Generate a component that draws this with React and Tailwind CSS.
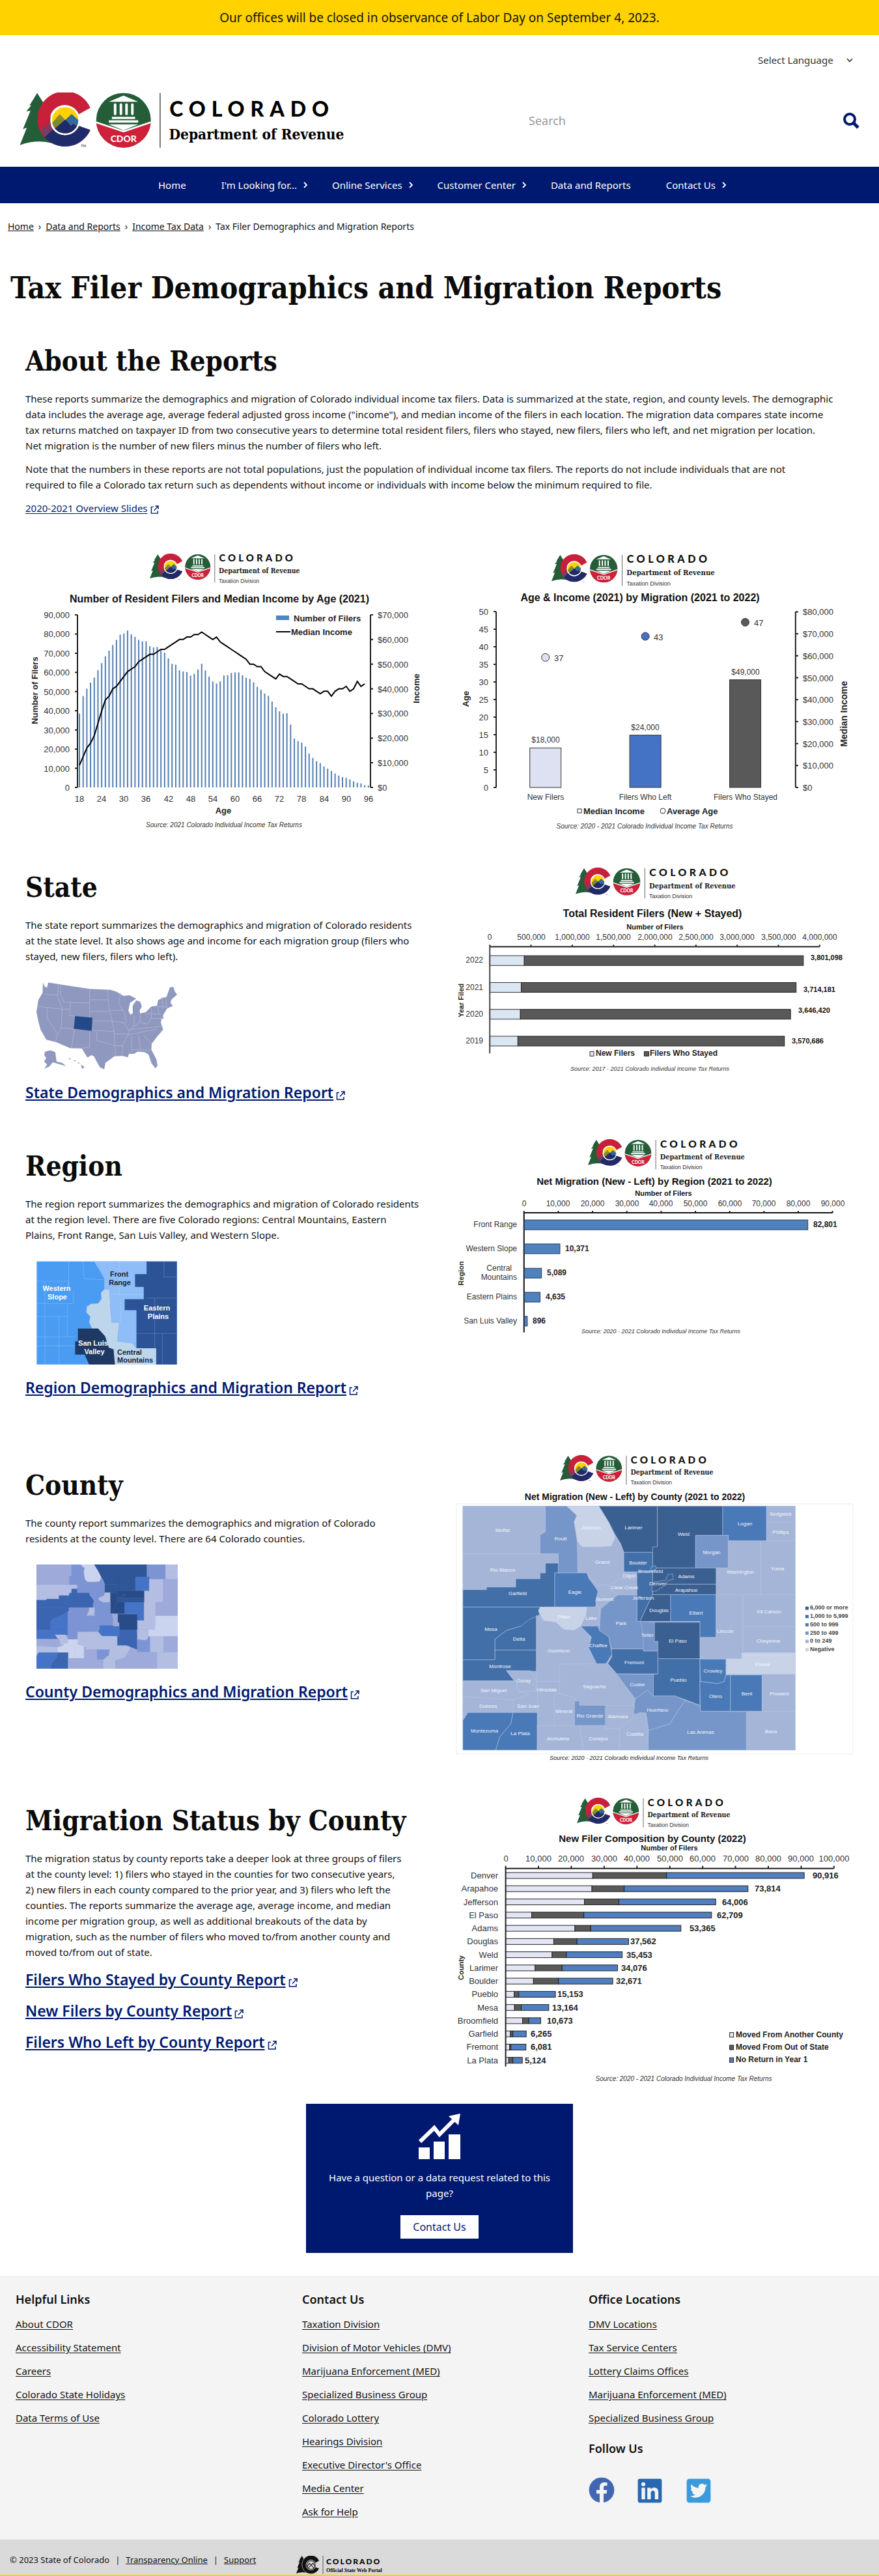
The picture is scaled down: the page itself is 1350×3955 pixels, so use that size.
import React from "react";
import { FaFacebook, FaLinkedin, FaTwitterSquare } from "react-icons/fa";

const C_SHAPE = "M357 107 A128 128 0 1 0 357 210 L303 191 A70 70 0 1 1 303 137 Z";
const TREE = "M110 38 L74 97 L83 95 L60 124 L79 121 L44 206 L62 199 L30 280 Q110 252 182 272 L170 120 L138 82 Z";

function Emblems({ id }) {
  return (
    <g>
      <clipPath id={id + "c"}><path d={C_SHAPE} /></clipPath>
      <clipPath id={id + "s"}><circle cx="240" cy="165" r="61" /></clipPath>
      <clipPath id={id + "r"}><circle cx="511" cy="165" r="127" /></clipPath>
      <path d={TREE} fill="#245d38" />
      <g clipPath={`url(#${id}c)`}>
        <rect x="100" y="30" width="270" height="270" fill="#c8203a" />
        <path d="M146 243 L215 170 L303 191 H400 V300 H100 Z" fill="#1f2a6b" />
        <path d="M110 222 L178 172 L200 190 L146 243 Z" fill="#7b3b62" />
        <path d="M100 200 L146 243 L180 300 H100 Z" fill="#1f2a6b" />
        <path d="M110 100 L128 215 L146 243 L110 250 Z" fill="#c8203a" />
      </g>
      <circle cx="240" cy="165" r="69" fill="#fff" />
      <g clipPath={`url(#${id}s)`}>
        <rect x="170" y="100" width="140" height="140" fill="#ffd200" />
        <path d="M170 188 L215 137 L262 190 L200 230 L170 230 Z" fill="#7d8a2c" />
        <path d="M196 157 L215 137 L238 160 L226 168 L214 158 L204 166 Z" fill="#8b8b3f" />
        <path d="M228 175 L270 136 L310 172 V200 H240 Z" fill="#35699a" />
        <path d="M240 162 L268 190 L278 180 L310 205 V240 H170 V215 L196 200 Z" fill="#1f2a6b" />
      </g>
      <g clipPath={`url(#${id}r)`}>
        <rect x="380" y="30" width="262" height="262" fill="#245d38" />
        <path d="M380 174 L511 216 L642 174 V300 H380 Z" fill="#d01f38" />
        <path d="M380 173 L511 217 L642 173" fill="none" stroke="#fff" strokeWidth="8" />
      </g>
      <g fill="#fff">
        <path d="M443 79 L511 50 L579 79 Z" />
        {[466, 493, 519, 546].map((x) => <rect key={x} x={x} y="87" width="12" height="54" rx="5" />)}
        <rect x="457" y="149" width="108" height="10" />
        <rect x="443" y="165" width="136" height="11" />
        <path d="M443 184 H579 L511 211 Z" />
      </g>
      <text x="511" y="267" textAnchor="middle" fill="#fff" fontSize="42" className="font-['Lato'] font-black">CDOR</text>
      <text x="313" y="290" fill="#111" fontSize="16" className="font-['Lato']">TM</text>
    </g>
  );
}

function Brand({ x, y, scale, id }) {
  return (
    <g transform={`translate(${x} ${y}) scale(${scale / 3}) translate(-30 -38)`}>
      <Emblems id={id} />
      <path d="M681 38 V322" stroke="#444" strokeWidth="5" />
      <text x="724" y="112" fontSize="97" fill="#0d0d0d" className="font-['Lato'] font-black tracking-[27px]">COLORADO</text>
      <text x="722" y="226" fontSize="68" fill="#222" className="font-['DejaVu_Serif_Condensed',serif] font-bold">Department of Revenue</text>
      <text x="722" y="322" fontSize="54" fill="#333" className="font-['Liberation_Sans',sans-serif]">Taxation Division</text>
    </g>
  );
}

function Label({ x, y, size = 12, anchor = "middle", bold, italic, fill = "#333", turn, children }) {
  const px = Math.round(x);
  const py = Math.round(y);
  return (
    <text
      x={px} y={py} dy=".35em" fontSize={size} textAnchor={anchor} fill={fill}
      fontWeight={bold ? 700 : 400} fontStyle={italic ? "italic" : "normal"}
      transform={turn ? `rotate(-90 ${px} ${py})` : undefined}
    >
      {children}
    </text>
  );
}

function Chart({ height, label, children }) {
  return (
    <svg viewBox={`0 0 611 ${height}`} role="img" aria-label={label} className="block h-auto w-full font-['Liberation_Sans',sans-serif]">
      {children}
    </svg>
  );
}

const FILERS = [38.5, 47.7, 51.5, 54.7, 57.3, 61.2, 64.8, 68.4, 71.4, 74.3, 77, 79.7, 80.3, 81.8, 79.8, 78.5, 77, 76.2, 76.2, 73.7, 73, 73.2, 71.5, 70.3, 67.3, 64.5, 64, 61.1, 60.5, 60.2, 58.3, 59.2, 61.5, 64.5, 61, 57.8, 55.2, 54.2, 55.3, 58.4, 58.5, 59.7, 60, 60, 58.5, 57.2, 56.6, 54.8, 52.5, 51, 49, 47.8, 44.8, 41.8, 39.7, 38.5, 38.7, 32.8, 25.5, 24.2, 23.4, 21.3, 17.7, 15.4, 13.7, 12.7, 11, 9.8, 8.6, 7.3, 6.2, 5.4, 5, 4.2, 3.2, 2.5, 2.1, 1.2, 1];
const INCOME = [9, 12.5, 16, 18, 21, 26, 31, 35.5, 37, 40, 41, 43, 45, 47, 48, 49, 51, 52, 53, 54, 54, 55, 56, 56, 57, 58, 59, 60, 60, 61, 61, 62, 62, 63, 62, 61, 60, 61, 59, 58, 57, 56, 55, 54, 53, 52, 50, 50, 49, 49, 47, 46, 45, 44, 46, 45, 45, 44, 43, 42, 42, 41, 40, 40, 39, 38, 39, 39, 37, 39, 40, 40, 41, 39, 40, 43, 41, 42];

function AgeChart() {
  const X = (v) => v / 2.45 - 9;
  const bar = (i) => 83 + i * 5.69;
  const base = 369;
  return (
    <Chart height={450} label="Number of resident filers and median income by age">
      <Brand x={191} y={11} scale={0.46} id="a" />
      <Label x={X(753)} y={79} size={16} bold fill="#111">Number of Resident Filers and Median Income by Age (2021)</Label>
      {FILERS.map((v, i) => <rect key={i} x={bar(i) - 1} y={base - v * 2.944} width="2" height={v * 2.944} fill="#557fb0" />)}
      <path d="M80 104 V369 M530 104 V369" stroke="#222" strokeWidth="2" />
      {[0, 1, 2, 3, 4, 5, 6, 7, 8, 9].map((n) => (
        <g key={n}>
          <path d={`M76 ${base - n * 29.44} h4`} stroke="#222" strokeWidth="2" />
          <Label x={68} y={base - n * 29.44} size={13} anchor="end">{n ? n + "0,000" : "0"}</Label>
        </g>
      ))}
      {[0, 1, 2, 3, 4, 5, 6, 7].map((n) => (
        <g key={n}>
          <path d={`M530 ${base - n * 37.86} h4`} stroke="#222" strokeWidth="2" />
          <Label x={541} y={base - n * 37.86} size={13} anchor="start">{n ? "$" + n + "0,000" : "$0"}</Label>
        </g>
      ))}
      {[18, 24, 30, 36, 42, 48, 54, 60, 66, 72, 78, 84, 90, 96].map((a) => <Label key={a} x={bar(a - 18)} y={386} size={13}>{a}</Label>)}
      <polyline points={INCOME.map((v, i) => `${bar(i)},${base - v * 3.786}`).join(" ")} fill="none" stroke="#000" strokeWidth="2" />
      <rect x={385} y={105} width="20" height="7" fill="#4f86c0" />
      <Label x={412} y={109} size={13} bold anchor="start" fill="#222">Number of Filers</Label>
      <path d="M385 130 h22" stroke="#000" strokeWidth="2" />
      <Label x={408} y={130} size={13} bold anchor="start" fill="#222">Median Income</Label>
      <Label x={14} y={220} size={13} bold turn fill="#222">Number of Filers</Label>
      <Label x={600} y={217} size={13} bold turn fill="#222">Income</Label>
      <Label x={X(768)} y={404} size={13} bold fill="#222">Age</Label>
      <Label x={X(769)} y={426} size={10} italic>Source: 2021 Colorado Individual Income Tax Returns</Label>
    </Chart>
  );
}

function MigrationChart() {
  const X = (v) => v / 2.34 - 20;
  const Y = (v) => v / 3 - 10;
  const groups = [
    ["New Filers", 369, 955, "$18,000", 538, 37, "#dde1f2"],
    ["Filers Who Left", 728, 896, "$24,000", 441, 43, "#4472c4"],
    ["Filers Who Stayed", 1087, 641, "$49,000", 376, 47, "#595959"],
  ];
  return (
    <Chart height={450} label="Age and income by migration">
      <Brand x={147} y={12} scale={0.5} id="b" />
      <Label x={X(708)} y={Y(261)} size={16} bold fill="#111">Age &amp; Income (2021) by Migration (2021 to 2022)</Label>
      <path d={`M62 ${Y(327)} V${Y(1138)} M${X(1268)} ${Y(327)} V${Y(1138)}`} stroke="#222" strokeWidth="2" />
      {[0, 5, 10, 15, 20, 25, 30, 35, 40, 45, 50].map((n) => (
        <g key={n}>
          <path d={`M58 ${369 - n * 5.4} h4`} stroke="#222" strokeWidth="2" />
          <Label x={50} y={369 - n * 5.4} size={13} anchor="end">{n}</Label>
        </g>
      ))}
      {[0, 1, 2, 3, 4, 5, 6, 7, 8].map((n) => (
        <g key={n}>
          <path d={`M522 ${369 - n * 33.7} h4`} stroke="#222" strokeWidth="2" />
          <Label x={533} y={369 - n * 33.7} size={13} anchor="start">{n ? "$" + n + "0,000" : "$0"}</Label>
        </g>
      ))}
      {groups.map(([name, cx, top, money, cy, age, fill]) => (
        <g key={name}>
          <rect x={X(cx) - 24} y={Y(top)} width="48" height={369 - Y(top)} fill={fill} stroke="#333" />
          <Label x={X(cx)} y={Y(top) - 12}>{money}</Label>
          <circle cx={X(cx)} cy={Y(cy)} r="6" fill={fill} stroke="#334" strokeWidth="1" />
          <Label x={X(cx) + 13} y={Y(cy) + 1} size={13} anchor="start">{age}</Label>
          <Label x={X(cx)} y={Y(1181)}>{name}</Label>
        </g>
      ))}
      <Label x={15} y={Y(728)} size={13} bold turn fill="#222">Age</Label>
      <Label x={596} y={Y(798)} size={14} bold turn fill="#222">Median Income</Label>
      <rect x="187" y="402" width="6" height="6" fill="none" stroke="#333" />
      <Label x={196} y={405} size={13} bold anchor="start" fill="#222">Median Income</Label>
      <circle cx="318" cy="405" r="4" fill="none" stroke="#333" />
      <Label x={324} y={405} size={13} bold anchor="start" fill="#222">Average Age</Label>
      <Label x={X(726)} y={Y(1315)} size={10} italic>Source: 2020 - 2021 Colorado Individual Income Tax Returns</Label>
    </Chart>
  );
}

function ResidentChart() {
  const X = (v) => v / 2.34 - 20;
  const Y = (v) => v / 2.063 - 20;
  const rows = [
    ["2022", 339, 293, 1296, "3,801,098", 1321, 331],
    ["2021", 424, 282, 1270, "3,714,181", 1296, 431],
    ["2020", 509, 279, 1250, "3,646,420", 1278, 498],
    ["2019", 594, 270, 1228, "3,570,686", 1254, 594],
  ];
  return (
    <Chart height={320} label="Total resident filers">
      <Brand x={184} y={3} scale={0.49} id="d" />
      <Label x={X(753)} y={Y(189)} size={16} bold fill="#111">Total Resident Filers (New + Stayed)</Label>
      <Label x={X(762)} y={Y(233)} size={11} bold fill="#111">Number of Filers</Label>
      {["0", "500,000", "1,000,000", "1,500,000", "2,000,000", "2,500,000", "3,000,000", "3,500,000", "4,000,000"].map((t, i) => (
        <g key={t}>
          <Label x={X(169 + i * 148.2)} y={Y(267)}>{t}</Label>
          <path d={`M${X(169 + i * 148.2)} ${Y(296)} v-3`} stroke="#222" strokeWidth="2" />
        </g>
      ))}
      <path d={`M${X(1354)} ${Y(296)} H${X(169)}`} stroke="#222" strokeWidth="2" fill="none" />
      {rows.map(([year, cy, a, b, total, tx, ty]) => (
        <g key={year}>
          <Label x={X(144)} y={Y(cy)} anchor="end">{year}</Label>
          <rect x={X(169)} y={Y(cy) - 7} width={X(a) - X(169)} height="15" fill="#dae6f2" stroke="#333" />
          <rect x={X(a)} y={Y(cy) - 7} width={X(b) - X(a)} height="15" fill="#595959" stroke="#222" />
          <Label x={X(tx)} y={Y(ty)} size={11} bold anchor="start" fill="#111">{total}</Label>
        </g>
      ))}
      <path d={`M${X(169)} ${Y(296)} V${Y(634)}`} stroke="#444" strokeWidth="2" />
      <Label x={8} y={Y(466)} size={11} bold turn fill="#222">Year Filed</Label>
      <rect x={X(529)} y={Y(628)} width="6" height="7" fill="#dae6f2" stroke="#333" />
      <Label x={X(549)} y={Y(634)} bold anchor="start" fill="#222">New Filers</Label>
      <rect x={X(724)} y={Y(628)} width="7" height="7" fill="#595959" stroke="#222" />
      <Label x={X(745)} y={Y(634)} bold anchor="start" fill="#222">Filers Who Stayed</Label>
      <Label x={X(743)} y={Y(682)} size={9} italic>Source: 2017 - 2021 Colorado Individual Income Tax Returns</Label>
    </Chart>
  );
}

function RegionChart() {
  const X = (v) => v / 2.34 - 20;
  const Y = (v) => v / 2.063 - 435;
  const rows = [
    [["Front Range"], 1176, 1312, "82,801"],
    [["Western Slope"], 1252, 421, "10,371"],
    [["Central", "Mountains"], 1329, 355, "5,089"],
    [["Eastern Plains"], 1405, 350, "4,635"],
    [["San Luis Valley"], 1481, 304, "896"],
  ];
  return (
    <Chart height={312} label="Net migration by region">
      <Brand x={203} y={5} scale={0.48} id="e" />
      <Label x={X(761)} y={Y(1040)} size={15} bold fill="#111">Net Migration (New - Left) by Region (2021 to 2022)</Label>
      <Label x={X(794)} y={Y(1077)} size={11} bold fill="#111">Number of Filers</Label>
      {[0, 1, 2, 3, 4, 5, 6, 7, 8, 9].map((n) => (
        <g key={n}>
          <Label x={X(292 + n * 123.2)} y={Y(1109)}>{n ? n + "0,000" : "0"}</Label>
          <path d={`M${X(292 + n * 123.2)} ${Y(1139)} v-3`} stroke="#222" strokeWidth="2" />
        </g>
      ))}
      <path d={`M${X(1401)} ${Y(1139)} H${X(292)} V${Y(1518)}`} stroke="#111" strokeWidth="2" fill="none" />
      {rows.map(([names, cy, end, total]) => (
        <g key={total}>
          {names.length === 1
            ? <Label x={X(267)} y={Y(cy)} anchor="end">{names[0]}</Label>
            : <><Label x={X(248)} y={Y(cy - 15)} anchor="end">{names[0]}</Label><Label x={X(267)} y={Y(cy + 14)} anchor="end">{names[1]}</Label></>}
          <rect x={X(293)} y={Y(cy) - 7} width={X(end) - X(293)} height="15" fill="#4f81bd" stroke="#223a5a" />
          <Label x={X(end + 20)} y={Y(cy)} bold anchor="start" fill="#222">{total}</Label>
        </g>
      ))}
      <Label x={8} y={Y(1330)} size={11} bold turn fill="#222">Region</Label>
      <Label x={X(783)} y={Y(1514)} size={9} italic>Source: 2020 - 2021 Colorado Individual Income Tax Returns</Label>
    </Chart>
  );
}

const SHADES = { D: "#3a5f91", B: "#426fa8", C: "#4a79b7", E: "#7695c8", L: "#a4b5d8", N: "#c8d3e8" };
const THUMB_SHADES = { K: "#284c88", D: "#2f5697", B: "#3b65b0", C: "#4573c8", E: "#7c94d3", L: "#9eaada", M: "#b3bee2", N: "#cbd4ef" };

/* name, outline, map shade, thumbnail shade, label x, label y */
const COUNTIES = [
  ["Moffat", "51,277 362,277 362,395 342,410 342,497 51,497", "L", "L", 201, 386],
  ["Routt", "362,277 442,277 480,320 470,350 482,440 484,585 410,585 410,497 342,497 342,410 362,395", "E", "E", 418, 426],
  ["Jackson", "442,277 563,277 600,350 625,420 610,462 560,466 500,465 482,440 470,350 480,320", "N", "N", 535, 375],
  ["Grand", "482,440 500,465 560,466 610,462 625,420 657,490 660,560 650,612 600,640 560,640 520,590 484,585", "L", "E", 575, 535],
  ["Larimer", "563,277 783,277 783,490 657,490 645,450 625,410 600,350", "D", "D", 693, 374],
  ["Weld", "783,277 1029,277 1029,412 927,412 927,562 765,562 765,465 783,465", "D", "D", 883, 406],
  ["Logan", "1029,277 1194,277 1194,437 1050,437 1050,412 1029,412", "C", "E", 1112, 356],
  ["Sedgwick", "1194,277 1302,277 1302,352 1194,352", "L", "M", 1247, 313],
  ["Phillips", "1194,352 1302,352 1302,437 1194,437", "L", "M", 1247, 395],
  ["Morgan", "927,412 1050,412 1050,562 927,562", "E", "C", 988, 490],
  ["Washington", "1050,437 1172,437 1172,685 1004,685 1004,562 1050,562", "L", "M", 1096, 580],
  ["Yuma", "1172,437 1302,437 1302,685 1172,685", "L", "L", 1236, 564],
  ["Rio Blanco", "51,497 410,497 410,540 362,540 362,585 342,585 342,612 250,612 250,650 140,650 140,662 51,662", "L", "M", 201, 570],
  ["Garfield", "51,662 140,662 140,650 250,650 250,612 342,612 342,585 362,585 362,540 410,540 410,585 397,585 397,742 51,742", "B", "B", 257, 678],
  ["Eagle", "397,585 518,585 525,610 550,650 560,670 550,742 397,742", "C", "B", 472, 671],
  ["Boulder", "657,490 765,490 765,580 657,580", "B", "D", 711, 538],
  ["Gilpin", "657,580 706,580 706,612 650,612", "L", "M", 678, 598],
  ["Clear Creek", "600,640 650,612 706,612 706,686 640,686 600,660", "L", "M", 658, 650],
  ["Summit", "520,590 560,640 600,640 600,660 640,686 600,720 565,760 550,715 560,670 550,650", "L", "E", 586, 706],
  ["Adams", "765,562 1004,562 1004,637 765,637", "D", "K", 892, 600],
  ["Arapahoe", "765,637 1004,637 1004,685 765,685", "D", "D", 892, 664],
  ["Jefferson", "706,580 765,580 765,685 740,750 718,808 706,808", "B", "K", 730, 699],
  ["Broomfield", "757,562 775,550 780,565 765,580", "B", "D", 757, 577],
  ["Denver", "765,628 815,618 822,592 842,590 842,615 822,620 815,640 795,655 780,668 762,670", "D", "D", 783, 634],
  ["Douglas", "765,685 833,685 833,808 718,808 740,750", "D", "K", 788, 756],
  ["Elbert", "833,685 1004,685 1004,882 943,882 943,808 833,808", "C", "C", 929, 768],
  ["Lincoln", "1004,685 1105,685 1105,950 1100,978 945,978 945,882 1004,882", "L", "M", 1040, 853],
  ["Kit Carson", "1105,685 1302,685 1302,832 1105,832", "L", "L", 1203, 762],
  ["Cheyenne", "1105,832 1302,832 1302,952 1105,952", "L", "N", 1201, 897],
  ["Park", "635,686 706,686 706,808 772,812 772,870 735,935 610,935 600,880 565,850 570,750 600,720", "E", "E", 646, 815],
  ["Teller", "720,808 772,812 772,900 785,900 785,945 730,945 730,870", "E", "L", 746, 870],
  ["El Paso", "772,812 943,812 943,980 785,980 785,900 772,900", "D", "K", 860, 896],
  ["Mesa", "51,742 342,742 340,775 300,820 215,850 172,890 172,985 51,985", "B", "B", 156, 843],
  ["Delta", "172,890 215,850 270,830 300,800 328,785 328,940 172,940", "B", "C", 263, 887],
  ["Montrose", "51,985 172,985 172,940 328,940 328,1038 215,1035 245,1082 51,1082", "B", "C", 190, 1015],
  ["Pitkin", "342,742 518,742 515,780 495,830 470,850 430,845 400,812 355,805 335,760", "N", "E", 432, 786],
  ["Lake", "518,742 565,742 560,830 495,830 515,780", "L", "M", 535, 791],
  ["Gunnison", "328,780 355,805 400,812 430,845 470,850 495,830 530,870 525,930 555,1005 415,1005 415,1085 328,1085", "L", "E", 412, 941],
  ["Chaffee", "495,830 560,830 565,850 600,880 612,960 590,1003 555,1005 525,930 535,880", "C", "E", 562, 919],
  ["Fremont", "610,935 730,935 730,945 785,945 785,1050 630,1050 597,1003 612,970", "B", "C", 697, 996],
  ["Saguache", "415,1005 597,1003 630,1050 660,1100 698,1165 690,1195 490,1195 470,1160 415,1140", "L", "M", 546, 1106],
  ["Custer", "630,1050 768,1052 768,1152 745,1125 700,1165 660,1100", "E", "M", 708, 1097],
  ["Pueblo", "785,980 943,980 943,1195 880,1165 850,1152 768,1152 768,1052 785,1050", "B", "B", 862, 1078],
  ["Kiowa", "1100,952 1302,952 1302,1052 1041,1052 1041,980 1100,980", "N", "N", 1178, 1006],
  ["Crowley", "943,982 1041,982 1041,1055 1035,1085 1010,1095 945,1085", "C", "M", 992, 1036],
  ["Otero", "943,1085 1010,1095 1035,1085 1041,1055 1058,1055 1058,1222 945,1222", "C", "E", 1003, 1153],
  ["Bent", "1058,1055 1177,1055 1177,1222 1058,1222", "C", "M", 1120, 1139],
  ["Prowers", "1177,1052 1302,1052 1302,1224 1177,1224", "L", "L", 1241, 1140],
  ["Baca", "1118,1224 1302,1224 1302,1401 1118,1401", "L", "M", 1211, 1315],
  ["Las Animas", "888,1172 943,1196 945,1222 1118,1224 1118,1401 748,1401 750,1310 830,1280 860,1220", "E", "L", 946, 1316],
  ["Huerfano", "700,1165 745,1125 768,1152 850,1152 888,1172 860,1220 830,1280 750,1310 740,1230 690,1235", "E", "M", 783, 1215],
  ["Costilla", "690,1255 715,1228 740,1230 748,1310 748,1401 640,1401 640,1302", "L", "M", 698, 1326],
  ["Rio Grande", "471,1175 490,1175 490,1195 588,1195 588,1288 471,1288", "E", "L", 529, 1243],
  ["Alamosa", "588,1195 698,1195 690,1255 640,1302 588,1302", "L", "E", 635, 1246],
  ["Hinsdale", "328,1085 415,1085 415,1140 395,1145 395,1288 332,1288", "L", "N", 367, 1123],
  ["Mineral", "395,1145 415,1140 470,1160 471,1288 395,1288", "L", "N", 430, 1220],
  ["Ouray", "215,1035 305,1035 328,1085 325,1130 260,1130 245,1082", "L", "M", 279, 1080],
  ["San Miguel", "51,1082 250,1082 260,1130 300,1145 240,1170 51,1155", "L", "L", 167, 1126],
  ["Dolores", "51,1155 240,1170 240,1228 70,1228 51,1265", "L", "M", 147, 1197],
  ["San Juan", "260,1130 332,1130 332,1228 240,1228 240,1170 300,1145", "L", "N", 296, 1198],
  ["Montezuma", "70,1228 240,1228 232,1280 190,1340 175,1401 51,1401 51,1265", "C", "C", 132, 1311],
  ["La Plata", "240,1228 331,1228 331,1401 175,1401 190,1340 232,1280", "C", "B", 267, 1323],
  ["Archuleta", "331,1288 490,1288 505,1401 331,1401", "L", "L", 409, 1348],
  ["Conejos", "490,1288 588,1288 588,1302 640,1302 640,1401 505,1401", "L", "L", 562, 1347],
];

function CountyMap() {
  const X = (v) => v / 2.45 - 10;
  const Y = (v) => v / 3 - 11;
  const legend = [["6,000 or more", "D"], ["1,000 to 5,999", "B"], ["500 to 999", "C"], ["250 to 499", "E"], ["0 to 249", "L"], ["Negative", "N"]];
  return (
    <Chart height={475} label="Net migration by county">
      <Brand x={160} y={4} scale={0.47} id="f" />
      <Label x={X(698)} y={Y(235)} size={14} bold fill="#111">Net Migration (New - Left) by County (2021 to 2022)</Label>
      <rect x="1" y="78" width="609" height="384" fill="none" stroke="#eceef2" />
      <rect x={X(51)} y={Y(277)} width={X(1302) - X(51)} height={Y(1401) - Y(277)} fill={SHADES.L} />
      <g transform="translate(-10 -11) scale(.40816 .33333)">
        {COUNTIES.map(([n, p, s]) => <polygon key={n} points={p} fill={SHADES[s]} stroke="#b3c4e2" strokeWidth=".6" vectorEffect="non-scaling-stroke" />)}
      </g>
      {COUNTIES.map(([n, , , , x, y]) => <Label key={n} x={X(x)} y={Y(y)} size={8} fill="#f3f6fc">{n}</Label>)}
      {legend.map(([t, s], i) => (
        <g key={t}>
          <rect x={X(1340)} y={Y(740 + i * 38.2)} width="5" height="5" fill={SHADES[s]} />
          <Label x={X(1358)} y={Y(745 + i * 38.2)} size={9} bold anchor="start" fill="#444">{t}</Label>
        </g>
      ))}
      <Label x={X(676)} y={Y(1438)} size={9} italic fill="#222">Source: 2020 - 2021 Colorado Individual Income Tax Returns</Label>
    </Chart>
  );
}

function CompositionChart() {
  const X = (v) => v / 2.34 - 20;
  const Y = (v) => v / 3 - 15;
  const rows = [
    ["Denver", 539, 804, 1299, "90,916", 1330],
    ["Arapahoe", 536, 652, 1097, "73,814", 1122],
    ["Jefferson", 509, 633, 981, "64,006", 1005],
    ["El Paso", 320, 507, 966, "62,709", 985],
    ["Adams", 475, 532, 856, "53,365", 886],
    ["Douglas", 399, 482, 668, "37,562", 673],
    ["Weld", 393, 444, 645, "35,453", 660],
    ["Larimer", 332, 429, 628, "34,076", 641],
    ["Boulder", 326, 416, 611, "32,671", 623],
    ["Pueblo", 257, 273, 405, "15,153", 411],
    ["Mesa", 258, 282, 381, "13,164", 392],
    ["Broomfield", 287, 309, 352, "10,673", 374],
    ["Garfield", 243, 252, 300, "6,265", 315],
    ["Fremont", 240, 245, 299, "6,081", 316],
    ["La Plata", 237, 252, 286, "5,124", 296],
  ];
  return (
    <Chart height={450} label="New filer composition by county">
      <Brand x={186} y={6} scale={0.47} id="g" />
      <Label x={X(753)} y={Y(248)} size={15} bold fill="#111">New Filer Composition by County (2022)</Label>
      <Label x={X(815)} y={Y(292)} size={11} bold fill="#111">Number of Filers</Label>
      {[0, 1, 2, 3, 4, 5, 6, 7, 8, 9, 10].map((n) => (
        <g key={n}>
          <Label x={X(226 + n * 118)} y={Y(338)} size={13}>{n ? n + "0,000" : "0"}</Label>
          <path d={`M${X(226 + n * 118)} ${Y(386)} v-4`} stroke="#222" strokeWidth="2" />
        </g>
      ))}
      {rows.map(([name, a, b, c, total, tx], i) => {
        const y = Y(417 + i * 60.8);
        return (
          <g key={name} stroke="#222" strokeWidth="1">
            <g stroke="none"><Label x={X(198)} y={y} size={13} anchor="end">{name}</Label></g>
            <rect x={X(226)} y={y - 4} width={X(a) - X(226)} height="9" fill="#e3e5f4" />
            <rect x={X(a)} y={y - 4} width={X(b) - X(a)} height="9" fill="#595959" />
            <rect x={X(b)} y={y - 4} width={X(c) - X(b)} height="9" fill="#4f7fc0" />
            <g stroke="none"><Label x={X(tx)} y={y} size={13} bold anchor="start" fill="#222">{total}</Label></g>
          </g>
        );
      })}
      <path d={`M${X(1405)} ${Y(386)} H${X(226)} V${Y(1298)}`} stroke="#222" strokeWidth="2" fill="none" />
      <Label x={8} y={Y(842)} size={11} bold turn fill="#222">County</Label>
      {[["Moved From Another County", "#e3e5f4", 1151], ["Moved From Out of State", "#595959", 1209], ["No Return in Year 1", "#4f7fc0", 1267]].map(([t, f, y]) => (
        <g key={t}>
          <rect x={X(1031)} y={Y(y) - 3} width="6" height="7" fill={f} stroke="#222" />
          <Label x={X(1053)} y={Y(y)} bold anchor="start" fill="#222">{t}</Label>
        </g>
      ))}
      <Label x={X(866)} y={Y(1353)} size={10} italic>Source: 2020 - 2021 Colorado Individual Income Tax Returns</Label>
    </Chart>
  );
}

function UsMap() {
  return (
    <svg viewBox="56 1508 217 134" role="img" aria-label="United States with Colorado highlighted" className="mt-7 ml-[17px] block h-[134px] w-[217px] overflow-visible">
      <g transform="translate(0 1310) scale(.43048 .54209)" strokeLinejoin="round">
        <path fill="#8f98bf" d="M153 366 L160 378 L168 380 L172 366 L250 376 L320 384 L395 387 L415 392 L440 404 L462 402 L486 412 L464 424 L458 446 L466 458 L474 452 L473 432 L486 417 L500 420 L506 434 L498 446 L500 454 L520 450 L540 434 L560 432 L564 416 L582 409 L594 407 L606 380 L618 378 L624 392 L632 400 L612 414 L608 424 L617 432 L596 440 L582 458 L583 472 L577 466 L574 480 L582 500 L562 518 L541 540 L540 556 L558 584 L562 602 L554 609 L540 594 L530 570 L515 563 L490 562 L478 568 L460 568 L456 578 L438 574 L408 575 L376 594 L372 612 L356 606 L335 575 L326 572 L312 579 L292 553 L250 552 L200 535 L165 528 L145 500 L138 480 L130 450 L137 415 L152 395 Z" />
        <path fill="#8f98bf" d="M160 562 L180 558 L197 563 L202 590 L222 594 L236 603 L205 596 L188 592 L176 604 L158 610 L168 598 L157 590 L165 580 L158 572 Z M288 599 L301 604 L294 612 Z M246 580 L254 582 L247 585 Z M262 586 L272 588 L264 590 Z M276 592 L286 594 L280 596 Z" />
        <path fill="none" stroke="#aab1d2" strokeWidth="1" vectorEffect="non-scaling-stroke" d="M158 400 L205 402 M135 434 L225 442 M218 373 L215 395 L228 422 L318 424 M208 372 L206 410 L222 440 L218 500 L205 512 L168 466 V438 M205 512 L198 534 M320 384 V505 M320 415 H388 M320 448 H388 M330 475 H400 M252 424 L248 460 L268 461 M225 442 H250 M265 498 L255 552 M215 495 L405 505 M320 505 V550 L290 552 M345 505 V530 L410 545 M384 387 L390 445 L400 475 L407 505 L412 575 M390 445 H440 M397 475 L442 480 L462 505 M410 545 H436 M405 512 H455 M430 395 L424 425 L445 455 L450 480 M462 505 L440 540 L434 573 M478 460 V490 L460 503 M500 456 V478 L478 492 M500 478 L525 485 L540 468 L540 440 M455 515 L560 498 M455 500 L580 490 M470 518 V565 M495 515 L502 560 M472 556 L538 558 M512 515 L540 540 M520 454 L575 456 M540 468 H580 M562 432 L568 458 M578 408 L582 440 M592 408 L594 436 M566 434 L600 436" />
        <path fill="#234a88" d="M268 461 L330 466 L327 503 L263 497 Z" />
      </g>
    </svg>
  );
}

function RegionMap() {
  return (
    <svg viewBox="56 1936 217 159" role="img" aria-label="Map of the Colorado regions" className="mt-7 ml-[17px] block h-[159px] w-[217px] overflow-visible font-['Liberation_Sans',sans-serif]">
      <g transform="translate(0 1310) scale(.43048 .54209)">
        <rect x="131" y="1156" width="500" height="292" fill="#4a9cf3" />
        <path fill="#8ebdf7" d="M335 1156 H523 V1192 H482 V1228 H513 V1263 H445 V1294 H487 V1400 L418 1384 L425 1330 H398 L390 1235 L372 1235 V1205 L355 1180 Z" />
        <path fill="#2d5397" d="M523 1156 H631 V1448 H557 V1402 H487 V1294 H445 V1263 H513 V1228 H482 V1192 H523 Z" />
        <path fill="#bdd6ec" d="M360 1245 L372 1235 H390 L394 1290 L398 1330 H425 L418 1383 L470 1388 L487 1402 H557 V1448 H408 L405 1405 H388 L375 1375 L350 1346 H328 L318 1328 L322 1312 L308 1300 L310 1284 L325 1276 L350 1275 L362 1262 Z" />
        <path fill="#203864" d="M278 1346 H350 L375 1368 L388 1400 L405 1405 L410 1448 H318 L302 1420 H268 V1382 H278 Z" />
        <path fill="none" stroke="#fff" strokeOpacity=".18" vectorEffect="non-scaling-stroke" d="M131 1212 H245 V1235 M245 1156 V1235 M296 1156 L300 1205 L370 1208 M131 1275 H262 V1240 M131 1312 H240 M240 1275 V1370 M131 1370 H268 M131 1395 H268 M210 1312 V1448 M160 1212 V1448 M425 1156 V1250 M392 1250 H513 M585 1156 V1200 H631 M523 1260 H631 M552 1260 V1400 M487 1360 H631 M580 1360 V1448 M430 1263 V1330" />
      </g>
      <g fontSize="11" fontWeight="700" textAnchor="middle" fill="#fff">
        <text x="87" y="1982">Western</text><text x="88" y="1995">Slope</text>
        <text x="241" y="2012">Eastern</text><text x="243" y="2025">Plains</text>
        <text x="143" y="2066">San Luis</text><text x="145" y="2079">Valley</text>
      </g>
      <g fontSize="11" fontWeight="700" fill="#16233a">
        <text x="183" y="1960" textAnchor="middle">Front</text><text x="184" y="1973" textAnchor="middle">Range</text>
        <text x="180" y="2080">Central</text><text x="180" y="2092">Mountains</text>
      </g>
    </svg>
  );
}

function CountyThumb() {
  return (
    <svg viewBox="51 277 1251 1124" preserveAspectRatio="none" role="img" aria-label="Map of the Colorado counties" className="mt-7 ml-[17px] block h-[160px] w-[217px]">
      <rect x="51" y="277" width="1251" height="1124" fill="#9eaada" />
      {COUNTIES.map(([n, p, , s]) => <polygon key={n} points={p} fill={THUMB_SHADES[s]} stroke={THUMB_SHADES[s]} strokeWidth="2" />)}
    </svg>
  );
}

function OutIcon({ className }) {
  return (
    <svg viewBox="0 0 14 14" aria-hidden="true" className={"inline-block align-[-3px] " + className} fill="none" stroke="currentColor" strokeWidth="1.5">
      <path d="M5 2.5 H1.5 V13 H12 V9 M8 1 H13 V6 M13 1 L6 8.5" />
    </svg>
  );
}

function ReportLink({ children, className = "mt-[19px]" }) {
  return (
    <p className={"text-[23px] leading-8 font-semibold text-[#001970] " + className}>
      <a href="#" className="underline decoration-2 underline-offset-2">{children}</a>
      <OutIcon className="ml-1 h-[14px] w-[14px]" />
    </p>
  );
}

const H2 = "font-['DejaVu_Serif_Condensed','DejaVu_Serif',serif] text-[42px] leading-[48px] font-bold text-[#0b0b0b]";
const ROW = "grid grid-cols-2 gap-x-[50px]";

function FooterList({ title, items }) {
  return (
    <div>
      <h3 className="text-lg leading-6 font-semibold">{title}</h3>
      <ul className="mt-[14px]">
        {items.map((t) => <li key={t} className="h-9 leading-6"><a href="#" className="underline underline-offset-2">{t}</a></li>)}
      </ul>
    </div>
  );
}

const NAV = [["Home"], ["I'm Looking for...", 1], ["Online Services", 1], ["Customer Center", 1], ["Data and Reports"], ["Contact Us", 1]];
const CRUMBS = ["Home", "Data and Reports", "Income Tax Data"];

export default function App() {
  return (
    <div className="bg-white font-['Noto_Sans',sans-serif] text-[15px] leading-6 text-[#111]">
      <div className="flex h-[54px] items-center justify-center bg-[#ffd200] text-[19px]">
        Our offices will be closed in observance of Labor Day on September 4, 2023.
      </div>
      <header>
        <div className="flex items-center justify-end gap-2 pt-[26px] pr-10 text-[#333]">
          <label className="flex items-center">
            <span className="sr-only">Select Language</span>
            <select className="w-32 appearance-none bg-transparent leading-6">
              <option>Select Language</option>
            </select>
          </label>
          <svg viewBox="0 0 10 7" className="h-[7px] w-[10px]" fill="none" stroke="#333" strokeWidth="1.6" aria-hidden="true"><path d="M1 1 L5 5.5 L9 1" /></svg>
        </div>
        <div className="flex items-start justify-between pt-[38px] pr-[30px] pb-7 pl-[30px]">
          <a href="#" aria-label="Colorado Department of Revenue">
            <svg viewBox="30 36 1508 260" className="block h-[86px] w-[500px]">
              <Emblems id="h" />
              <path d="M681 38 V292" stroke="#333" strokeWidth="4" />
              <text x="724" y="147" fontSize="97" className="font-['Lato'] font-black tracking-[27px]">COLORADO</text>
              <text x="722" y="255" fontSize="68" className="font-['DejaVu_Serif_Condensed',serif] font-bold">Department of Revenue</text>
            </svg>
          </a>
          <form className="flex h-[86px] w-[508px] items-center" onSubmit={(e) => e.preventDefault()}>
            <input aria-label="Search" placeholder="Search" className="min-w-0 flex-1 bg-transparent text-[18px] outline-none placeholder:text-[#999]" />
            <button aria-label="Search">
              <svg viewBox="0 0 25 25" className="h-[25px] w-[25px]" fill="none" stroke="#001970" strokeWidth="4"><circle cx="10" cy="10" r="8" /><path d="M16 16 L23 23" strokeWidth="5" /></svg>
            </button>
          </form>
        </div>
        <nav className="flex h-14 items-center justify-center bg-[#001970] pl-2 text-white">
          {NAV.map(([t, more]) => (
            <a key={t} href="#" className="flex items-center gap-[10px] px-[19px]">
              {t}
              {more
                ? <svg viewBox="0 0 6 10" className="h-[10px] w-[6px]" fill="none" stroke="#fff" strokeWidth="1.8" aria-hidden="true"><path d="M1 1 L5 5 L1 9" /></svg>
                : <span className="w-[6px]" />}
            </a>
          ))}
        </nav>
      </header>
      <main>
        <nav aria-label="Breadcrumb" className="mt-[26px] flex px-3 text-sm leading-5">
          {CRUMBS.map((t) => (
            <React.Fragment key={t}>
              <a href="#" className="underline">{t}</a>
              <span className="mx-[7px]">›</span>
            </React.Fragment>
          ))}
          <span>Tax Filer Demographics and Migration Reports</span>
        </nav>
        <h1 className="mt-14 px-4 font-['DejaVu_Serif_Condensed','DejaVu_Serif',serif] text-[46px] leading-[56px] font-bold text-[#0b0b0b]">
          Tax Filer Demographics and Migration Reports
        </h1>
        <div className="px-[39px]">
          <h2 className={"mt-[61px] " + H2}>About the Reports</h2>
          <p className="mt-[21px] max-w-[1250px]">
            These reports summarize the demographics and migration of Colorado individual income tax filers. Data is summarized at the state, region, and county levels. The demographic data includes the average age, average federal adjusted gross income ("income"), and median income of the filers in each location. The migration data compares state income tax returns matched on taxpayer ID from two consecutive years to determine total resident filers, filers who stayed, new filers, filers who left, and net migration per location.<br />Net migration is the number of new filers minus the number of filers who left.
          </p>
          <p className="mt-3 max-w-[1230px]">
            Note that the numbers in these reports are not total populations, just the population of individual income tax filers. The reports do not include individuals that are not required to file a Colorado tax return such as dependents without income or individuals with income below the minimum required to file.
          </p>
          <p className="mt-3 text-[#001970]">
            <a href="#" className="underline underline-offset-2">2020-2021 Overview Slides</a>
            <OutIcon className="ml-1 h-[13px] w-[13px]" />
          </p>
          <div className={"mt-12 " + ROW}>
            <AgeChart />
            <MigrationChart />
          </div>
          <section className={"mt-10 " + ROW}>
            <div className="pt-[9px]">
              <h2 className={H2}>State</h2>
              <p className="mt-[21px] max-w-[606px]">The state report summarizes the demographics and migration of Colorado residents at the state level. It also shows age and income for each migration group (filers who stayed, new filers, filers who left).</p>
              <UsMap />
              <ReportLink>State Demographics and Migration Report</ReportLink>
            </div>
            <ResidentChart />
          </section>
          <section className={"mt-[52px] " + ROW}>
            <div className="pt-[22px]">
              <h2 className={H2}>Region</h2>
              <p className="mt-[21px] max-w-[606px]">The region report summarizes the demographics and migration of Colorado residents at the region level. There are five Colorado regions: Central Mountains, Eastern<br />Plains, Front Range, San Luis Valley, and Western Slope.</p>
              <RegionMap />
              <ReportLink>Region Demographics and Migration Report</ReportLink>
            </div>
            <RegionChart />
          </section>
          <section className={"mt-[85px] " + ROW}>
            <div className="pt-[26px]">
              <h2 className={H2}>County</h2>
              <p className="mt-[21px] max-w-[590px]">The county report summarizes the demographics and migration of Colorado residents at the county level. There are 64 Colorado counties.</p>
              <CountyThumb />
              <ReportLink>County Demographics and Migration Report</ReportLink>
            </div>
            <CountyMap />
          </section>
          <section className={"mt-[49px] " + ROW}>
            <div className="pt-[17px]">
              <h2 className={H2}>Migration Status by County</h2>
              <p className="mt-[21px] max-w-[590px]">The migration status by county reports take a deeper look at three groups of filers at the county level: 1) filers who stayed in the counties for two consecutive years,<br />2) new filers in each county compared to the prior year, and 3) filers who left the counties. The reports summarize the average age, average income, and median income per migration group, as well as additional breakouts of the data by migration, such as the number of filers who moved to/from another county and moved to/from out of state.</p>
              <ReportLink className="mt-[14px]">Filers Who Stayed by County Report</ReportLink>
              <ReportLink className="mt-4">New Filers by County Report</ReportLink>
              <ReportLink className="mt-4">Filers Who Left by County Report</ReportLink>
            </div>
            <CompositionChart />
          </section>
        </div>
        <section className="mx-auto mt-[25px] flex w-[410px] flex-col items-center bg-[#001970] px-6 pt-[15px] pb-[22px] text-center text-white">
          <svg viewBox="0 0 64 70" className="h-[70px] w-16" fill="#fff" aria-hidden="true">
            <rect x="0" y="52" width="17" height="18" /><rect x="23" y="43" width="17" height="27" /><rect x="46" y="32" width="18" height="38" />
            <path d="M2 43 L24 22 L32 32 L56 8" fill="none" stroke="#fff" strokeWidth="6" />
            <path d="M46 4 L64 0 L61 18 Z" />
          </svg>
          <p className="mt-4">Have a question or a data request related to this page?</p>
          <a href="#" className="mt-[22px] flex h-9 w-[120px] items-center justify-center bg-white text-base text-[#001970]">Contact Us</a>
        </section>
      </main>
      <footer className="mt-[35px]">
        <div className="grid h-[405px] grid-cols-[440px_440px_1fr] bg-[#f4f4f4] px-6 pt-6">
          <FooterList title="Helpful Links" items={["About CDOR", "Accessibility Statement", "Careers", "Colorado State Holidays", "Data Terms of Use"]} />
          <FooterList title="Contact Us" items={["Taxation Division", "Division of Motor Vehicles (DMV)", "Marijuana Enforcement (MED)", "Specialized Business Group", "Colorado Lottery", "Hearings Division", "Executive Director's Office", "Media Center", "Ask for Help"]} />
          <div>
            <FooterList title="Office Locations" items={["DMV Locations", "Tax Service Centers", "Lottery Claims Offices", "Marijuana Enforcement (MED)", "Specialized Business Group"]} />
            <h3 className="mt-[11px] text-lg leading-6 font-semibold">Follow Us</h3>
            <div className="mt-8 flex gap-[33px]">
              <a href="#" aria-label="Facebook"><FaFacebook size={40} color="#4267b2" /></a>
              <a href="#" aria-label="LinkedIn"><FaLinkedin size={42} color="#2867b2" /></a>
              <a href="#" aria-label="Twitter"><FaTwitterSquare size={42} color="#3a9bdc" /></a>
            </div>
          </div>
        </div>
        <div className="grid h-14 grid-cols-[440px_1fr] border-b-2 border-[#ffd200] bg-[#dadada] pl-[15px] text-[13px]">
          <p className="flex items-center gap-[9px] pt-2">
            <span>© 2023 State of Colorado</span><span>|</span>
            <a href="#" className="underline">Transparency Online</a><span>|</span>
            <a href="#" className="underline">Support</a>
          </p>
          <svg viewBox="0 0 136 29" className="mt-[25px] block h-[29px] w-[136px]" role="img" aria-label="Colorado Official State Web Portal">
            <g transform="scale(.108 .112) translate(-30 -38)">
              <path d={TREE} fill="#111" />
              <path d={C_SHAPE} fill="#111" stroke="#dadada" strokeWidth="6" />
              <circle cx="240" cy="165" r="60" fill="#dadada" stroke="#111" strokeWidth="10" />
              <path d="M185 190 L215 140 L240 162 L268 140 L298 180 M200 210 L240 162 L280 205" fill="none" stroke="#111" strokeWidth="9" />
            </g>
            <path d="M41 0 V28" stroke="#555" />
            <text x="46" y="13" fontSize="12" className="font-['Lato'] font-black tracking-[2px]">COLORADO</text>
            <text x="46" y="25" fontSize="8" className="font-['Liberation_Serif',serif] font-bold">Official State Web Portal</text>
          </svg>
        </div>
      </footer>
    </div>
  );
}
